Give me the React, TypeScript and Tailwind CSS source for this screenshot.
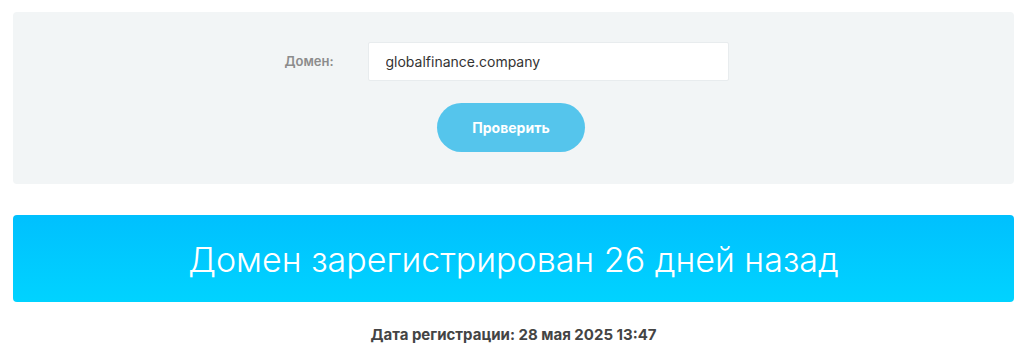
import React from 'react';

export default function App() {
  return (
    <div className="min-h-[360px] bg-white px-[13px] pt-[12px] font-['Inter','Noto_Sans',sans-serif]">
      <div className="flex flex-col items-center rounded-[4px] bg-[#f2f5f6] pt-[30px] pb-[32px]">
        <div className="mr-[14px] flex items-center">
          <label className="mr-[34px] w-[49px] text-[13px] font-semibold text-[#8c8c8c]">Домен:</label>
          <input
            readOnly
            value="globalfinance.company"
            className="h-[39px] w-[361px] rounded-[2px] border border-[#e8ecee] bg-white px-[17px] text-[14px] text-[#333] outline-none"
          />
        </div>
        <button className="mr-[5px] mt-[22px] h-[49px] w-[148px] rounded-full bg-[#55c5ec] text-[14px] font-bold text-white">
          Проверить
        </button>
      </div>

      <div className="mt-[31px] flex h-[87px] items-center justify-center rounded-[4px] bg-gradient-to-b from-[#00c0fe] to-[#00d3ff]">
        <h1 className="pt-[2px] text-[34px] font-light leading-none text-white">Домен зарегистрирован 26 дней назад</h1>
      </div>

      <p className="mt-[22px] text-center text-[15px] font-bold text-[#444]">Дата регистрации: 28 мая 2025 13:47</p>
    </div>
  );
}
